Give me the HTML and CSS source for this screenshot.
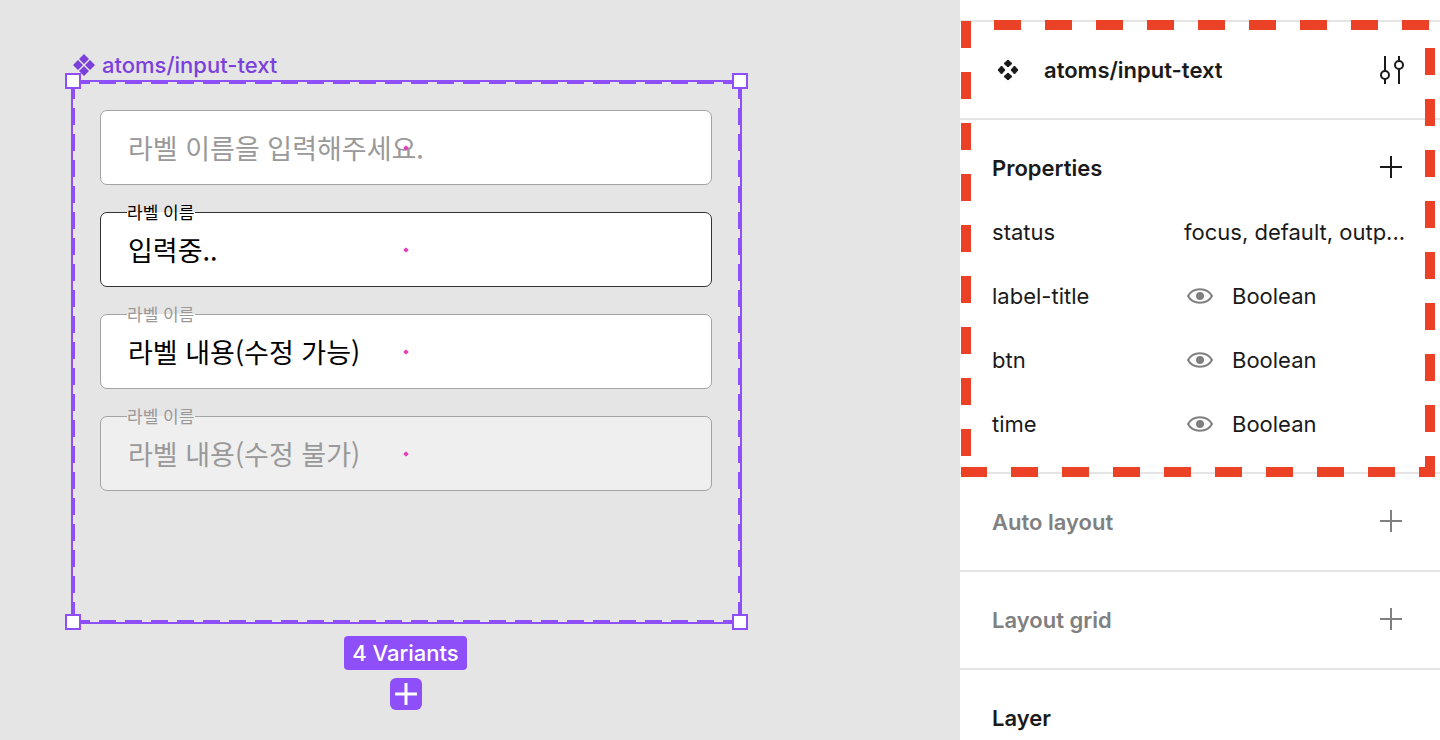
FILE: index.html
```
<!DOCTYPE html>
<html lang="ko">
    <head>
        <meta charset="utf-8">
        <meta name="viewport" content="width=device-width, initial-scale=1">
        <title>atoms/input-text</title>
        <link rel="stylesheet" href="styles.css">
    </head>
    <body>

    <main class="canvas">
        <div class="frameTitle">
            <svg width="22" height="22" viewBox="0 0 22 22" fill="currentColor" aria-hidden="true">
                <path d="M11 0l5 5-5 5-5-5zM11 12l5 5-5 5-5-5zM5 6l5 5-5 5-5-5zM17 6l5 5-5 5-5-5z"/>
            </svg>
            <span>atoms/input-text</span>
        </div>

        <div class="frame">
            <span class="handle topLeft"></span>
            <span class="handle topRight"></span>
            <span class="handle bottomLeft"></span>
            <span class="handle bottomRight"></span>

            <div class="field">
                <input type="text" placeholder="라벨 이름을 입력해주세요." aria-label="라벨 이름">
                <span class="dot"></span>
            </div>
            <div class="field focus">
                <label for="focusInput">라벨 이름</label>
                <input type="text" id="focusInput" value="입력중..">
                <span class="dot"></span>
            </div>
            <div class="field">
                <label for="outputInput">라벨 이름</label>
                <input type="text" id="outputInput" value="라벨 내용(수정 가능)">
                <span class="dot"></span>
            </div>
            <div class="field disabled">
                <label for="disabledInput">라벨 이름</label>
                <input type="text" id="disabledInput" value="라벨 내용(수정 불가)" disabled>
                <span class="dot"></span>
            </div>
        </div>

        <div class="variants">
            <span class="badge">4 Variants</span>
            <button type="button" class="addVariant" aria-label="Add variant">
                <svg width="32" height="32" viewBox="0 0 32 32" stroke="#fff" stroke-width="3"><path d="M16 5v22M5 16h22"/></svg>
            </button>
        </div>
    </main>

    <aside class="panel">
        <div class="highlight">
            <section>
                <div class="row">
                    <h2 class="componentName">
                        <svg width="32" height="32" viewBox="0 0 32 32" fill="currentColor" stroke="currentColor" stroke-linejoin="round" aria-hidden="true">
                            <path d="M16 6l4 3.500-4 3.500-4-3.500zM16 19l4 3.500-4 3.500-4-3.500zM9.500 12l3.500 4-3.500 4L6 16zM22.500 12l3.500 4-3.500 4L19 16z"/>
                        </svg>
                        atoms/input-text
                    </h2>
                    <button type="button" class="iconButton" aria-label="Configuration">
                        <svg width="32" height="32" viewBox="0 0 32 32"><path d="M9 2v15M9 25v5M23 2v5M23 15v15"/><circle cx="9" cy="21" r="4"/><circle cx="23" cy="11" r="4"/></svg>
                    </button>
                </div>
            </section>

            <section>
                <div class="row">
                    <h2>Properties</h2>
                    <button type="button" class="iconButton" aria-label="Add property">
                        <svg width="32" height="32" viewBox="0 0 32 32"><path d="M15 4v22M4 15h22"/></svg>
                    </button>
                </div>
                <dl>
                    <div class="property">
                        <dt>status</dt>
                        <dd>focus, default, outp...</dd>
                    </div>
                    <div class="property">
                        <dt>label-title</dt>
                        <dd>
                            <svg class="eye" width="32" height="32" viewBox="0 0 32 32"><path d="M4 16c5-9 19-9 24 0c-5 9-19 9-24 0z"/><circle cx="16" cy="16" r="4"/></svg>
                            Boolean
                        </dd>
                    </div>
                    <div class="property">
                        <dt>btn</dt>
                        <dd>
                            <svg class="eye" width="32" height="32" viewBox="0 0 32 32"><path d="M4 16c5-9 19-9 24 0c-5 9-19 9-24 0z"/><circle cx="16" cy="16" r="4"/></svg>
                            Boolean
                        </dd>
                    </div>
                    <div class="property">
                        <dt>time</dt>
                        <dd>
                            <svg class="eye" width="32" height="32" viewBox="0 0 32 32"><path d="M4 16c5-9 19-9 24 0c-5 9-19 9-24 0z"/><circle cx="16" cy="16" r="4"/></svg>
                            Boolean
                        </dd>
                    </div>
                </dl>
            </section>

            <div class="marker">
                <svg width="100%" height="100%" stroke="#eb4127" stroke-width="10" stroke-dasharray="27 24" aria-hidden="true">
                    <line x1="33" y1="5" x2="100%" y2="5"/>
                    <line x1="100%" y1="28" x2="100%" y2="100%" transform="translate(-5 0)"/>
                    <line x1="-1" y1="100%" x2="100%" y2="100%" transform="translate(0 -5)"/>
                    <line x1="5" y1="1" x2="5" y2="100%"/>
                </svg>
            </div>
        </div>

        <section class="unset">
            <div class="row">
                <h2>Auto layout</h2>
                <button type="button" class="iconButton" aria-label="Add auto layout">
                    <svg width="32" height="32" viewBox="0 0 32 32"><path d="M15 4v22M4 15h22"/></svg>
                </button>
            </div>
        </section>
        <section class="unset">
            <div class="row">
                <h2>Layout grid</h2>
                <button type="button" class="iconButton" aria-label="Add layout grid">
                    <svg width="32" height="32" viewBox="0 0 32 32"><path d="M15 4v22M4 15h22"/></svg>
                </button>
            </div>
        </section>
        <section>
            <div class="row">
                <h2>Layer</h2>
            </div>
        </section>
    </aside>

    </body>
</html>
```
FILE: styles.css
```
* {
    box-sizing: border-box;
}

body {
    display: flex;
    height: 100vh;
    margin: 0;
    overflow: hidden;
    background-color: #e5e5e5;
    color: #1a1a1a;
    font-family: Inter, "Noto Sans CJK KR", sans-serif;
    font-size: 22px;
    line-height: 28px;
}

svg {
    display: block;
    flex: none;
}

button {
    padding: 0;
    border: 0;
    background: none;
    color: inherit;
    cursor: pointer;
}

/**** CANVAS ****/

.canvas {
    flex: 1;
    min-width: 0;
    padding: 50px 218px 0 71px;
}

.frameTitle {
    display: flex;
    align-items: center;
    gap: 7px;
    height: 30px;
    padding: 0 0 1px 2px;
    color: #7b3fdc;
    font-weight: 500;
}

.frame {
    position: relative;
    display: flex;
    flex-direction: column;
    gap: 27px;
    padding: 28px 28px 131px 27px;
    border: 2px solid #8f4ff8;
    /* dashed inner outline: top, bottom, left, right */
    background-image:
        linear-gradient(to right, #8f4ff8 17px, transparent 17px),
        linear-gradient(to right, #8f4ff8 17px, transparent 17px),
        linear-gradient(to bottom, #8f4ff8 17px, transparent 17px),
        linear-gradient(to bottom, #8f4ff8 17px, transparent 17px);
    background-size: 26px 2px, 26px 2px, 2px 26px, 2px 26px;
    background-position: 0 0, 0 100%, 0 0, 100% 0;
    background-repeat: repeat-x, repeat-x, repeat-y, repeat-y;
}

.handle {
    position: absolute;
    width: 16px;
    height: 16px;
    border: 2px solid #8f4ff8;
    background-color: #fff;
}

.topLeft {
    top: -9px;
    left: -8px;
}

.topRight {
    top: -9px;
    right: -8px;
}

.bottomLeft {
    bottom: -8px;
    left: -8px;
}

.bottomRight {
    bottom: -8px;
    right: -8px;
}

.field {
    position: relative;
    color: #000;
    font-family: "Noto Sans CJK KR", sans-serif;
}

.field input {
    display: block;
    width: 100%;
    height: 75px;
    padding: 0 27px;
    border: 1px solid #a3a3a3;
    border-radius: 7px;
    outline: 0;
    background-color: #fff;
    color: inherit;
    font-family: inherit;
    font-size: 27px;
}

.field input::placeholder {
    color: #999;
    opacity: 1;
}

.field label {
    position: absolute;
    top: -12px;
    left: 27px;
    padding-right: 1px;
    background-image: linear-gradient(#e5e5e5 50%, #fff 50%);
    color: #999;
    font-size: 17px;
    line-height: 24px;
}

.focus label {
    color: #000;
}

.focus input {
    border-color: #333;
}

.disabled label {
    background-image: linear-gradient(#e5e5e5 50%, #efefef 50%);
}

.disabled input {
    background-color: #efefef;
    color: #999;
}

.dot {
    position: absolute;
    top: 50%;
    left: 50%;
    width: 4px;
    height: 4px;
    border-radius: 1px;
    background-color: #e83fb8;
    transform: translate(-50%, -50%) rotate(45deg);
}

.variants {
    display: flex;
    flex-direction: column;
    align-items: center;
    gap: 8px;
    margin-top: 12px;
    padding-right: 2px;
}

.badge {
    padding: 3px 8px;
    border-radius: 4px;
    background-color: #8f4ff8;
    color: #fff;
    font-weight: 500;
}

.addVariant {
    border-radius: 6px;
    background-color: #8f4ff8;
}

/**** PANEL ****/

.panel {
    width: 33.3333%;
    padding-top: 20px;
    background-color: #fff;
}

.panel section {
    padding: 16px 32px;
    border-top: 2px solid #e5e5e5;
}

.row {
    display: flex;
    align-items: center;
    justify-content: space-between;
    height: 64px;
}

.panel h2 {
    margin: 0;
    font-size: 22px;
    font-weight: 600;
}

.panel .unset {
    color: #808080;
}

.componentName {
    display: flex;
    align-items: center;
    gap: 20px;
}

.iconButton svg {
    fill: none;
    stroke: currentColor;
    stroke-width: 2;
}

dl {
    margin: 0;
}

.property {
    display: grid;
    grid-template-columns: 192px 1fr;
    align-items: center;
    height: 64px;
}

.property dd {
    display: flex;
    align-items: center;
    gap: 16px;
    margin: 0;
    white-space: nowrap;
}

.eye {
    fill: none;
    stroke: #808080;
    stroke-width: 2;
}

.eye circle {
    fill: #808080;
    stroke: none;
}

.highlight {
    position: relative;
}

/* red dashes lie over the two top sections */
.marker {
    position: absolute;
    top: 0;
    right: 5px;
    bottom: -5px;
    left: 1px;
    z-index: 1;
    pointer-events: none;
}
```
